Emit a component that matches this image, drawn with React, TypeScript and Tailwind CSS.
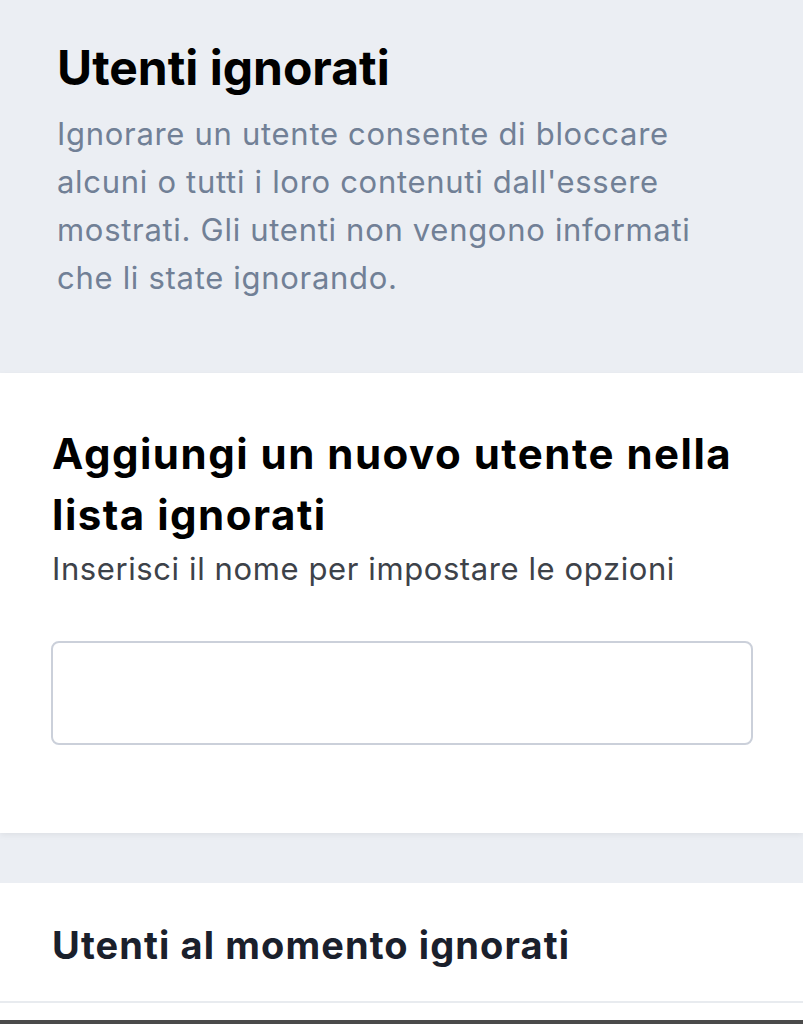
import React from "react";

export default function App() {
  return (
    <div className="w-[803px] h-[1024px] overflow-hidden bg-white flex flex-col" style={{ fontFamily: "Inter, 'Noto Sans', sans-serif" }}>
      <section className="bg-[#ebeef3] h-[373px] pl-[57px] pr-[40px] pt-[38px] shrink-0">
        <h1 className="text-[48px] leading-[60px] font-bold text-black">Utenti ignorati</h1>
        <p className="mt-[12px] text-[31px] leading-[48px] tracking-[0.7px] text-[#718096] max-w-[670px]">
          Ignorare un utente consente di bloccare alcuni o tutti i loro contenuti dall'essere mostrati. Gli utenti non vengono informati che li state ignorando.
        </p>
      </section>
      <section className="bg-white h-[460px] pl-[52px] pr-[40px] pt-[50px] shrink-0 shadow-[0_2px_6px_rgba(0,0,0,0.06)] relative z-10">
        <h2 className="text-[42px] leading-[61px] tracking-[1.5px] font-bold text-black">Aggiungi un nuovo utente nella lista ignorati</h2>
        <p className="mt-[4px] text-[31px] leading-[40px] tracking-[0.6px] text-[#3d4249]">Inserisci il nome per impostare le opzioni</p>
        <input className="mt-[52px] -ml-[1px] block w-[702px] h-[104px] border-2 border-[#cbd0da] rounded-[8px] bg-white outline-none" />
      </section>
      <div className="bg-[#ebeef3] h-[50px] shrink-0" />
      <section className="bg-white h-[120px] pl-[52px] pt-[38px] border-b-2 border-[#e8ebef] shrink-0">
        <h3 className="text-[38px] leading-[48px] tracking-[1.1px] font-bold text-[#1a202c]">Utenti al momento ignorati</h3>
      </section>
      <div className="bg-white h-[17px] shrink-0" />
      <div className="bg-[#4a4a4a] flex-1" />
    </div>
  );
}
